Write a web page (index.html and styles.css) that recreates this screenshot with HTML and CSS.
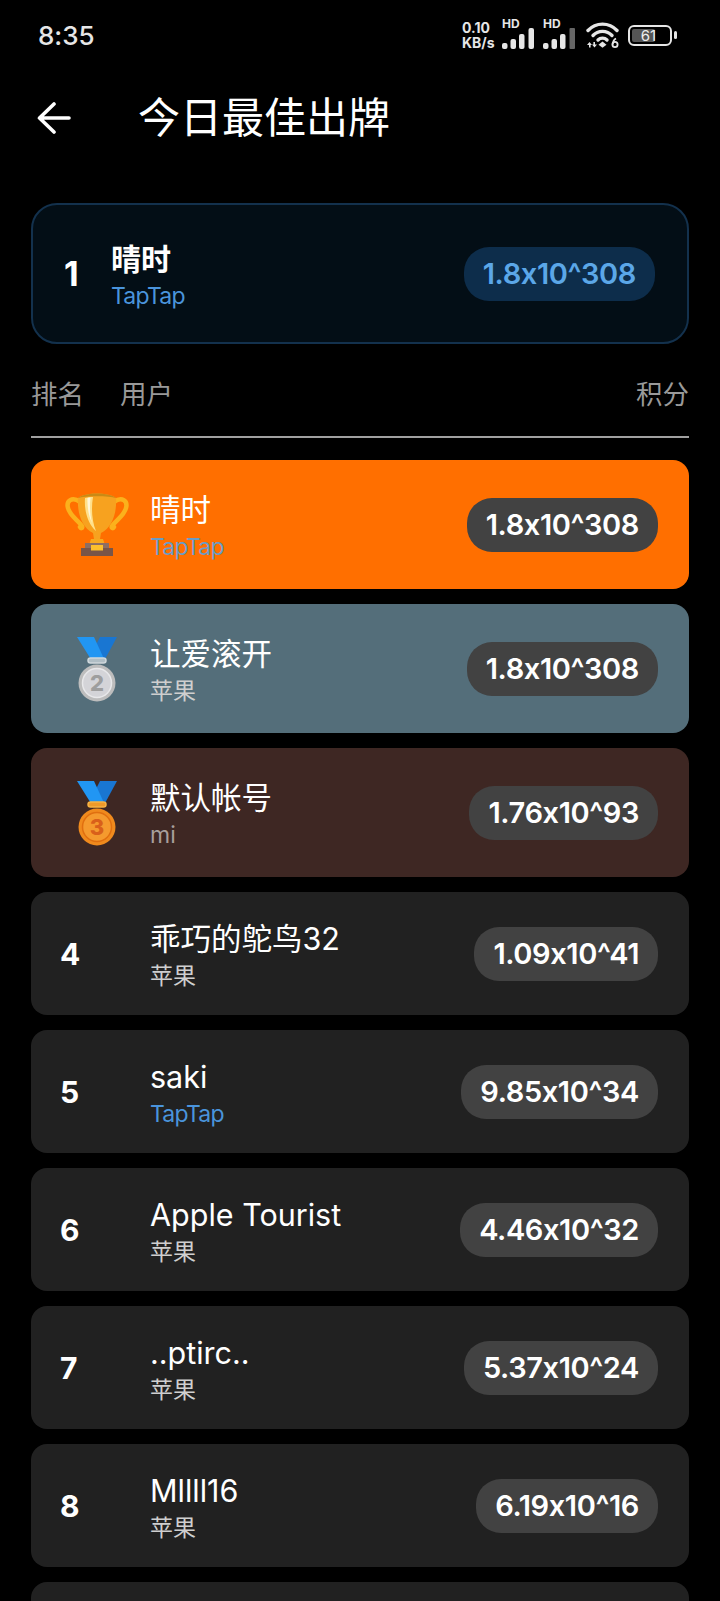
FILE: index.html
```html
<!DOCTYPE html>
<html lang="zh-CN">
<head>
    <meta charset="UTF-8">
    <meta name="viewport" content="width=device-width, initial-scale=1.0">
    <title>今日最佳出牌</title>
    <link rel="stylesheet" href="styles.css">
</head>
<body>
    <div class="page">
        <div class="status">
            <span class="status__time">8:35</span>
            <div class="status__icons">
                <div class="speed"><span>0.10</span><span>KB/s</span></div>
                <div class="signal">
                    <span class="signal__hd">HD</span>
                    <svg width="34" height="22" viewBox="0 0 34 22"><g fill="#e6e6e6"><rect x="0" y="15" width="5.500" height="6" rx="2"/><rect x="8.500" y="11" width="5.500" height="10" rx="2"/><rect x="17" y="6" width="5.500" height="15" rx="2"/><rect x="26.500" y="0" width="5.500" height="21" rx="2"/></g></svg>
                </div>
                <div class="signal">
                    <span class="signal__hd">HD</span>
                    <svg width="34" height="22" viewBox="0 0 34 22"><g fill="#e6e6e6"><rect x="0" y="15" width="5.500" height="6" rx="2"/><rect x="8.500" y="11" width="5.500" height="10" rx="2"/><rect x="17" y="6" width="5.500" height="15" rx="2"/></g><rect x="26.500" y="0" width="5.500" height="21" rx="1" fill="#666"/></svg>
                </div>
                <svg class="wifi" width="33" height="26" viewBox="0 0 33 26">
                    <g fill="none" stroke="#e6e6e6" stroke-width="3.400" stroke-linecap="round">
                        <path d="M2 8.500 C10 0 23 0 31 8.500"/>
                        <path d="M7 13.500 C12 8 21 8 26 13.500"/>
                        <path d="M12 18 C14.500 15.500 18.500 15.500 21 18"/>
                    </g>
                    <path d="M16.500 19.500 L20.500 22.800 L16.500 25.800 L12.500 22.800 Z" fill="#e6e6e6"/>
                    <g fill="#e6e6e6"><path d="M3.500 20 L6 23 H4.600 V25.500 H3 V23 H1 Z"/><path d="M8.500 25.500 L6 22.500 H7.400 V20 H9 V22.500 H11 Z"/></g>
                    <circle cx="29" cy="22.500" r="2.600" fill="none" stroke="#e6e6e6" stroke-width="1.800"/>
                    <path d="M26.700 22.500 Q27 18 30 16.500" fill="none" stroke="#e6e6e6" stroke-width="1.800"/>
                </svg>
                <div class="battery">
                    <div class="battery__body"><span class="battery__fill"></span><span class="battery__num">61</span></div>
                    <span class="battery__nub"></span>
                </div>
            </div>
        </div>

        <div class="topbar">
            <svg class="topbar__back" width="34" height="34" viewBox="0 0 34 34">
                <path d="M2.500 17 H32 M17 3 L2.500 17 L17 31" fill="none" stroke="#fff" stroke-width="3.600" stroke-linecap="round" stroke-linejoin="round"/>
            </svg>
            <h1 class="topbar__title">今日最佳出牌</h1>
        </div>

        <div class="content">
            <div class="hero">
                <span class="hero__rank">1</span>
                <div class="info info--hero">
                    <span class="hero__name">晴时</span>
                    <span class="sub sub--blue">TapTap</span>
                </div>
                <span class="score score--blue">1.8x10^308</span>
            </div>

            <div class="thead">
                <span class="thead__rank">排名</span>
                <span class="thead__user">用户</span>
                <span>积分</span>
            </div>

            <div class="list">
                <div class="row row--gold">
                    <div class="rank">
                        <svg class="trophy" width="64" height="64" viewBox="0 0 64 64">
                            <g fill="none" stroke="#fbb11c" stroke-width="4.500" stroke-linecap="round">
                                <path d="M15 9 C7 3 1 8 3 15 C5 23 13 27 17 33 C18 35 16 36 15 34"/>
                                <path d="M49 9 C57 3 63 8 61 15 C59 23 51 27 47 33 C46 35 48 36 49 34"/>
                            </g>
                            <path d="M13 5 C20 -1 44 -1 51 5 C52 20 47 35 36 40 L35 46 L29 46 L28 40 C17 35 12 20 13 5 Z" fill="#f7a21f"/>
                            <path d="M13 5 C20 -1 44 -1 51 5 C44 2.500 20 2.500 13 5 Z" fill="#c98a16"/>
                            <path d="M20 5 C23 4 26 4 28 4 C26 16 27 28 31 38 C23 31 19 18 20 5 Z" fill="#ffe08a"/>
                            <path d="M22.500 5 C23.500 4.500 24.500 4.500 25.500 4.500 C24.500 14 25 22 27 30 C24 24 22 14 22.500 5 Z" fill="#fff6d8"/>
                            <path d="M26 46 H38 L40 52 H24 Z" fill="#f6a81e"/>
                            <rect x="20" y="50" width="24" height="6" fill="#8d6e63"/>
                            <rect x="16" y="55" width="32" height="8" fill="#795548"/>
                            <rect x="26" y="52" width="12" height="5.500" fill="#fbc02d"/>
                        </svg>
                    </div>
                    <div class="info">
                        <span class="name">晴时</span>
                        <span class="sub sub--blue sub--faded">TapTap</span>
                    </div>
                    <span class="score">1.8x10^308</span>
                </div>

                <div class="row row--silver">
                    <div class="rank">
                        <svg class="medal" width="40" height="66" viewBox="0 0 40 66">
                            <path d="M40 1 H23 L17 13 L27 25 Z" fill="#1976d2"/>
                            <path d="M0 1 H17 L28 25 H15 Z" fill="#2196f3"/>
                            <rect x="11" y="22" width="18" height="5" rx="2.500" fill="#b0bec5" stroke="#cfd8dc" stroke-width="1.500"/>
                            <circle cx="20" cy="47" r="18.500" fill="#bdbdbd"/>
                            <circle cx="20" cy="47" r="14.500" fill="#d4d4d8" stroke="#e8e8ea" stroke-width="1.500"/>
                            <text class="medal__num" x="20" y="55" fill="#9e9e9e">2</text>
                        </svg>
                    </div>
                    <div class="info">
                        <span class="name">让爱滚开</span>
                        <span class="sub">苹果</span>
                    </div>
                    <span class="score">1.8x10^308</span>
                </div>

                <div class="row row--bronze">
                    <div class="rank">
                        <svg class="medal" width="40" height="66" viewBox="0 0 40 66">
                            <path d="M40 1 H23 L17 13 L27 25 Z" fill="#1976d2"/>
                            <path d="M0 1 H17 L28 25 H15 Z" fill="#2196f3"/>
                            <rect x="11" y="22" width="18" height="5" rx="2.500" fill="#ef9a2a" stroke="#f7b244" stroke-width="1.500"/>
                            <circle cx="20" cy="47" r="18.500" fill="#f08a1d"/>
                            <circle cx="20" cy="47" r="14.500" fill="#f59a2e" stroke="#e06f10" stroke-width="1.500"/>
                            <text class="medal__num" x="20" y="55" fill="#d9601a">3</text>
                        </svg>
                    </div>
                    <div class="info">
                        <span class="name">默认帐号</span>
                        <span class="sub sub--dim">mi</span>
                    </div>
                    <span class="score">1.76x10^93</span>
                </div>

                <div class="row">
                    <div class="rank">4</div>
                    <div class="info">
                        <span class="name">乖巧的鸵鸟32</span>
                        <span class="sub">苹果</span>
                    </div>
                    <span class="score">1.09x10^41</span>
                </div>

                <div class="row">
                    <div class="rank">5</div>
                    <div class="info">
                        <span class="name">saki</span>
                        <span class="sub sub--blue">TapTap</span>
                    </div>
                    <span class="score">9.85x10^34</span>
                </div>

                <div class="row">
                    <div class="rank">6</div>
                    <div class="info">
                        <span class="name">Apple Tourist</span>
                        <span class="sub">苹果</span>
                    </div>
                    <span class="score">4.46x10^32</span>
                </div>

                <div class="row">
                    <div class="rank">7</div>
                    <div class="info">
                        <span class="name">..ptirc..</span>
                        <span class="sub">苹果</span>
                    </div>
                    <span class="score">5.37x10^24</span>
                </div>

                <div class="row">
                    <div class="rank">8</div>
                    <div class="info">
                        <span class="name">Mllll16</span>
                        <span class="sub">苹果</span>
                    </div>
                    <span class="score">6.19x10^16</span>
                </div>

                <div class="row row--empty"></div>
            </div>
        </div>
    </div>
</body>
</html>
```

FILE: styles.css
```css
* {
    box-sizing: border-box;
}

html,
body {
    margin: 0;
    background: #000;
}

body {
    color: #fff;
    font-family: "Inter", "Noto Sans CJK SC", sans-serif;
    font-feature-settings: "calt" 0; /* keeps the x in scores from turning into a times sign */
}

.page {
    width: 720px;
    height: 1601px;
    overflow: hidden;
}

/* status bar */
.status {
    display: flex;
    justify-content: space-between;
    align-items: center;
    height: 70px;
    padding: 0 43px 0 38px;
}

.status__time {
    font-size: 26px;
    font-weight: 500;
    color: #e6e6e6;
}

.status__icons {
    display: flex;
    align-items: center;
}

.speed {
    display: flex;
    flex-direction: column;
    width: 40px;
    font-size: 14px;
    line-height: 15px;
    font-weight: 700;
    color: #e6e6e6;
}

.signal {
    position: relative;
    width: 41px;
    height: 30px;
    padding-top: 8px;
}

.signal__hd {
    position: absolute;
    left: 0;
    top: -4px;
    font-size: 12px;
    font-weight: 700;
    color: #e6e6e6;
}

.wifi {
    margin: 0 9px 0 2px;
}

.battery {
    display: flex;
    align-items: center;
    gap: 2px;
}

.battery__body {
    position: relative;
    width: 44px;
    height: 21px;
    border: 2px solid #e6e6e6;
    border-radius: 6px;
}

.battery__fill {
    position: absolute;
    left: 2px;
    top: 2px;
    bottom: 2px;
    width: 23px;
    background: #555;
    border-radius: 2px;
}

.battery__num {
    position: absolute;
    left: 0;
    width: 37px;
    text-align: center;
    font-size: 15px;
    line-height: 17px;
    color: #eee;
}

.battery__nub {
    width: 3px;
    height: 8px;
    background: #e6e6e6;
    border-radius: 2px;
}

/* title */
.topbar {
    display: flex;
    align-items: center;
    height: 96px;
    padding-left: 37px;
    margin-bottom: 37px;
}

.topbar__back {
    margin-right: 67px;
}

.topbar__title {
    margin: 0;
    font-size: 42px;
    font-weight: 400;
    line-height: 56px;
}

.content {
    padding: 0 31px;
}

/* card on top: the player's own score */
.hero {
    display: flex;
    align-items: center;
    height: 141px;
    padding: 0 32px 0 31px;
    background: #030e16;
    border: 2px solid #13314d;
    border-radius: 26px;
}

.hero__rank {
    width: 47px;
    font-size: 34px;
    font-weight: 700;
}

.hero__name {
    font-size: 30px;
    line-height: 38px;
    font-weight: 700;
}

.info--hero {
    padding-top: 9px;
}

/* table head */
.thead {
    display: flex;
    margin-top: 32px;
    padding-bottom: 24px;
    border-bottom: 2px solid #a0a0a0;
    margin-bottom: 22px;
    font-size: 26.500px;
    line-height: 36px;
    color: #999;
}

.thead__rank {
    width: 89px;
}

.thead__user {
    flex: 1;
}

/* rows */
.list {
    display: flex;
    flex-direction: column;
    gap: 15px;
}

.row {
    display: flex;
    align-items: center;
    flex-shrink: 0;
    height: 123px;
    padding: 0 31px 0 29px;
    background: #212121;
    border-radius: 16px;
}

.row--gold,
.row--silver,
.row--bronze {
    height: 129px;
}

.row--gold {
    background: #ff6f00;
}

.row--silver {
    background: #546e7a;
}

.row--bronze {
    background: #3e2723;
}

.rank {
    display: flex;
    align-items: center;
    width: 90px;
    font-size: 30px;
    font-weight: 700;
}

.trophy {
    margin-left: 5px;
}

.medal {
    margin-left: 17px;
}

.medal__num {
    font-size: 22px;
    font-weight: 800;
    text-anchor: middle;
}

.info {
    display: flex;
    flex-direction: column;
    flex: 1;
    padding-top: 6px;
}

.name {
    font-size: 30.500px;
    line-height: 38px;
}

.sub {
    font-size: 23px;
    line-height: 36px;
    color: #cfcfcf;
}

.sub--blue {
    color: #4a94dc;
    letter-spacing: -0.800px;
}

.sub--faded {
    color: #6a9cc6;
}

.sub--dim {
    color: #a89f9c;
}

.score {
    height: 54px;
    padding: 0 19px;
    background: #424242;
    border-radius: 25px;
    font-size: 29px;
    font-weight: 600;
    line-height: 54px;
    letter-spacing: -0.400px;
}

.score--blue {
    background: #0d2d4b;
    color: #5ba7e8;
}
```
